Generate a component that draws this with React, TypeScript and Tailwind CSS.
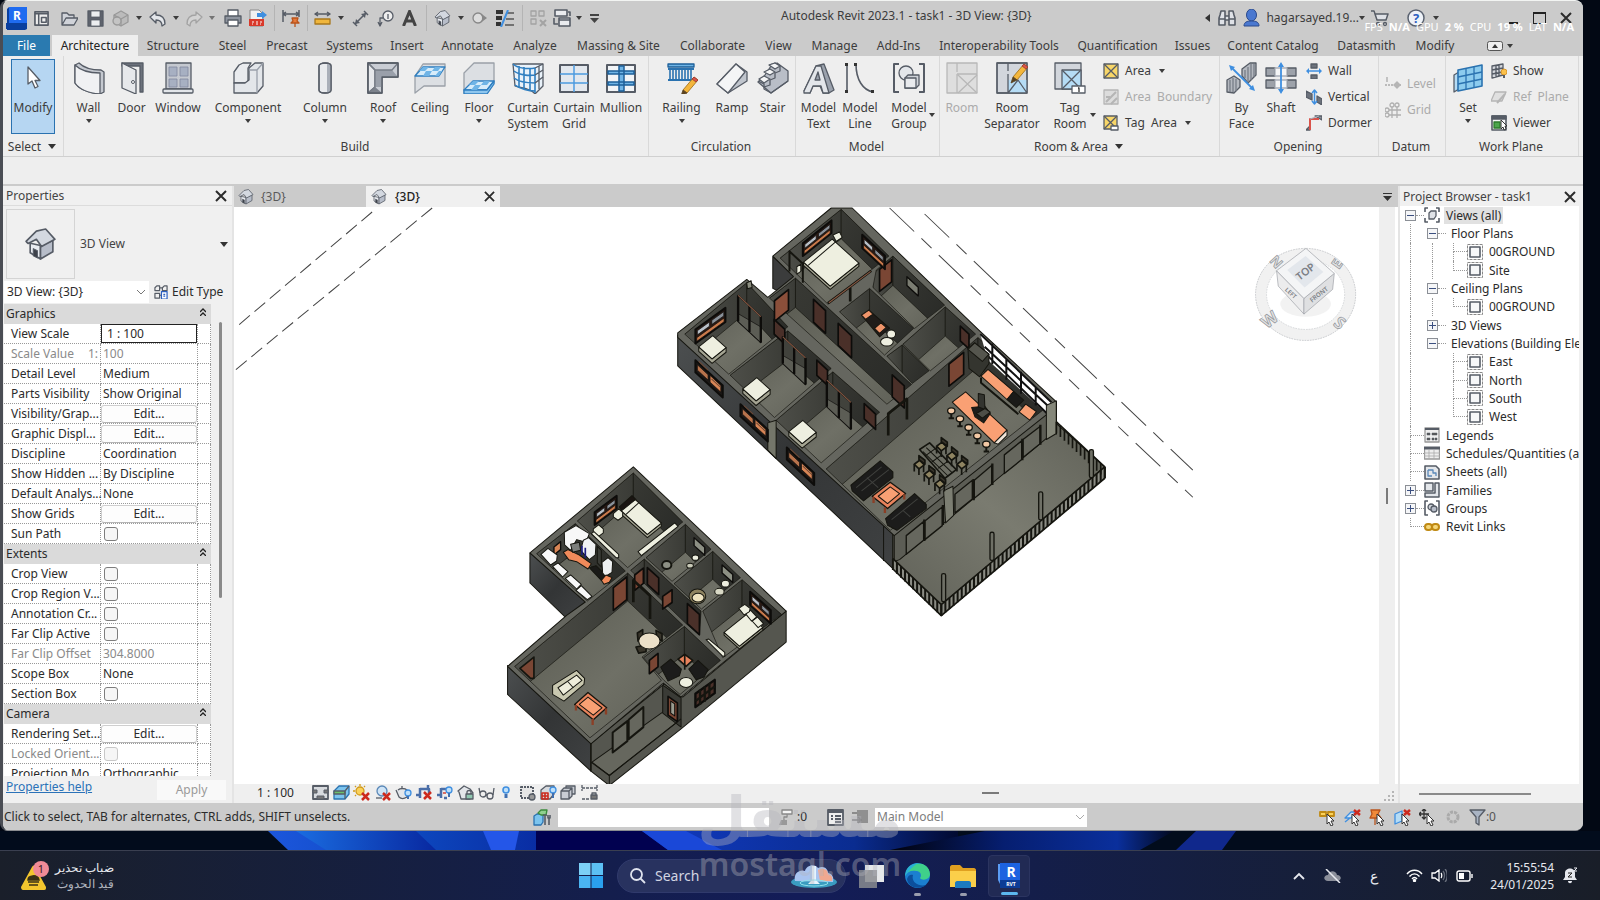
import { useId, useState } from "react"
import type { ReactNode } from "react"
import { clsx } from "clsx"

// ─── Icon helpers ─────────────────────────────────────────────────────────────

const INK = "#565c66"
const STEEL = "#dfe2e7"
const SHADE = "#a9afb9"
const BLUE = "#2f7fc1"
const SKY = "#b5dcf5"

interface IconProps {
  size?: number
  box?: number
  className?: string
  children: ReactNode
}

function Icon({ size = 32, box = 32, className, children }: IconProps) {
  return (
    <svg
      width={size}
      height={size}
      viewBox={`0 0 ${box} ${box}`}
      fill="none"
      stroke={INK}
      strokeWidth={1.3}
      strokeLinejoin="round"
      className={clsx("shrink-0", className)}
      aria-hidden="true"
    >
      {children}
    </svg>
  )
}

function Caret({ className }: { className?: string }) {
  return (
    <svg width="6" height="4" viewBox="0 0 6 4" className={clsx("shrink-0", className)} aria-hidden="true">
      <path d="M0 0h6L3 4z" fill="#3c3c3c" />
    </svg>
  )
}

function BigCaret() {
  return (
    <svg width="8" height="5" viewBox="0 0 8 5" className="shrink-0" aria-hidden="true">
      <path d="M0 0h8L4 5z" fill="#333" />
    </svg>
  )
}

function CloseX({ size = 12 }: { size?: number }) {
  return (
    <svg width={size} height={size} viewBox="0 0 12 12" stroke="#2c2c2c" strokeWidth="2" aria-hidden="true">
      <path d="M1 1l10 10M11 1L1 11" />
    </svg>
  )
}

function HouseIcon({ size = 16 }: { size?: number }) {
  return (
    <Icon size={size} box={32}>
      <path d="M3 14l3-2v12l10 6V17z" fill="#e9ecf1" strokeWidth={1.6} />
      <path d="M16 17l12-5v11l-12 7z" fill="#b7bdc9" strokeWidth={1.6} />
      <path d="M2 13L12 3l9-2 9 10-13 7-5-7-8 4z" fill="#d3d8e0" strokeWidth={1.6} />
      <path d="M9 20l4 2v7l-4-2z" fill="#3d414a" strokeWidth={1} />
    </Icon>
  )
}

// ─── Ribbon icons ─────────────────────────────────────────────────────────────

const pencil = (
  <g strokeWidth="0.8">
    <path d="M28 2l4 3-11 13-4-3z" fill="#f4b63c" stroke="#9a6a14" />
    <path d="M17 15l4 3-6 3z" fill="#5a4320" stroke="#5a4320" />
    <path d="M28 2l4 3-2 2-4-3z" fill="#d9534a" stroke="#9a3a30" />
  </g>
)

const ribbonIcons: Record<string, ReactNode> = {
  modify: (
    <Icon>
      <path d="M11 7v17l4-3 3 7 3-1.500-3-6h5z" fill="#fff" />
    </Icon>
  ),
  wall: (
    <Icon>
      <path d="M2 3l4-2c5 5 14 7 22 7l3 2v20l-4 2C14 31 5 26 2 21z" fill="#c5c9d0" />
      <path d="M2 3c6 6 15 8 25 8v21C15 31 6 27 2 21z" fill="#f0f1f3" />
    </Icon>
  ),
  door: (
    <Icon>
      <path d="M6 1h21v29h-3V4H6z" fill="#6c727c" />
      <path d="M6 1l14 7v24L6 26z" fill="#e6e8eb" />
      <circle cx="17" cy="20" r="1.500" fill="#fff" strokeWidth={1} />
    </Icon>
  ),
  window: (
    <Icon>
      <rect x="4" y="1" width="25" height="26" fill="#c5c9d0" />
      <path d="M7 5h8v9H7zM18 5h8v9h-8zM7 17h8v8H7zM18 17h8v8h-8z" fill="#a7b0c2" stroke="#8189a0" strokeWidth={0.8} />
      <rect x="1" y="27" width="30" height="4" rx="1" fill="#e3e6ea" />
    </Icon>
  ),
  component: (
    <Icon>
      <path d="M2 21V10l5-7 4-2h8l-3 5v15z" fill="#e9ebee" />
      <path d="M2 31V21h11l4-3V6l6-5h8v23l-6 7z" fill="#e3e6ea" />
      <path d="M25 31V8l6-7M17 8h8" stroke="#9aa0aa" />
    </Icon>
  ),
  column: (
    <Icon>
      <path d="M10 4c0-4 12-4 12 0v24c0 4-12 4-12 0z" fill="#e9ebee" />
      <path d="M18 2c3 0 4 1 4 2v24c0 2-2 3-4 3z" fill={SHADE} stroke="none" />
      <path d="M10 4c0-4 12-4 12 0v24c0 4-12 4-12 0z" />
    </Icon>
  ),
  roof: (
    <Icon>
      <path d="M1 1h30v14H15v16H1z" fill="#c9cdd4" />
      <path d="M1 1l7 7v17l-7 6z" fill="#e6e8eb" />
      <path d="M8 8h17l6 7H15v10l-7 0z" fill="#9aa0aa" stroke="none" />
      <path d="M1 31l7-6 7 6z" fill="#7c828c" stroke="none" />
      <path d="M31 1l-6 7H8v17M1 1l7 7M1 31l7-6" stroke="#777d87" />
      <path d="M1 1h30v14H15v16H1z" />
    </Icon>
  ),
  ceiling: (
    <Icon>
      <path d="M1 14L9 2h22v22H10l-9 7z" fill="#dcdfe3" stroke="#9aa0a8" />
      <path d="M1 14L9 5h22l-6 9z" fill="#d7ecfa" stroke={BLUE} />
      <path d="M9 5h6l-4 4H5zM21 5h6l-3 4h-6zM12 9h6l-3 5H9zM25 9h3l-3 5h-4z" fill="#6fb4e6" stroke="none" />
    </Icon>
  ),
  floor: (
    <Icon>
      <path d="M1 29V11L11 1h20v20l-7 10H1z" fill="#dcdfe3" stroke="#9aa0a8" />
      <path d="M1 28l9-9h21l-7 9z" fill="#d7ecfa" stroke={BLUE} />
      <path d="M1 28h23l7-9v3l-7 10H1z" fill="#8ec6ee" stroke={BLUE} />
      <path d="M10 19h6l-4 4H6zM21 19h6l-3 4h-6zM12 23h6l-4 5H8z" fill="#6fb4e6" stroke="none" />
    </Icon>
  ),
  curtainSystem: (
    <Icon>
      <path d="M1 2h30v22l-8 8c-4-6-14-6-20-8z" fill="#e9f2fa" />
      <path d="M1 2c5 5 17 5 22 4M2 9c5 4 15 5 21 4M2 16c5 4 15 5 21 5M3 23c5 4 14 6 20 6M7 4v22M12 5v22M18 6v23M23 6v25" stroke={BLUE} strokeWidth={1.600} />
      <path d="M23 6l8-4M23 13l8-5M23 21l8-6M27 4v23" />
    </Icon>
  ),
  curtainGrid: (
    <Icon>
      <rect x="2" y="3" width="28" height="27" fill="#e3e8ee" strokeWidth={2} />
      <path d="M2 12h28M2 21h28M16 3v27" stroke="#4c9be0" strokeWidth={1.500} />
    </Icon>
  ),
  mullion: (
    <Icon>
      <rect x="2" y="3" width="28" height="27" fill="#f1f4f7" strokeWidth={2} />
      <path d="M3 9h26v3H3zM3 20h26v3H3zM14 4h5v25h-5z" fill="#6fb4e6" stroke="#1d5f99" strokeWidth={1.500} />
    </Icon>
  ),
  railing: (
    <Icon>
      <path d="M2 2h26v3H2z" fill="#6fb4e6" stroke="#1d5f99" />
      <path d="M2 7h26M2 18h26" stroke="#2a72b0" strokeWidth={2} />
      <path d="M4 7v12M7 7v12M10 7v12M13 7v12M16 7v12M19 7v12M22 7v12M25 7v12" stroke="#2a72b0" strokeWidth={1.600} />
      <g transform="translate(0 13)">{pencil}</g>
    </Icon>
  ),
  ramp: (
    <Icon>
      <path d="M1 22L20 2l11 8v9L12 31z" fill="#c0c5cd" />
      <path d="M1 22L20 2l9 8-17 21z" fill="#f4f5f6" />
    </Icon>
  ),
  stair: (
    <Icon>
      <path d="M14 31l17-12V9L20 1l-6 3-4 6-4 6-5 4z" fill="#b9bec7" />
      <path d="M12 3l6-2 5 3v5l-5 2v5l-5 2v5l-6 2" fill="none" />
      <path d="M12 3l6-2 5 3-5 3zM7 10l6-3 5 3-5 3zM2 17l5-3 6 3-6 4z" fill="#f4f5f6" />
      <path d="M1 19l6 3v5l7 4 17-12" />
    </Icon>
  ),
  modelText: (
    <Icon>
      <path d="M1 29L13 4l8-2 10 26-5 3h-6l-3-7h-7l-3 7z" fill="#9ba2ad" />
      <path d="M1 29L13 4h5l8 27h-6l-2-7h-8l-3 7H1zM12 18h5l-2-8z" fill="#e3e6ea" />
    </Icon>
  ),
  modelLine: (
    <Icon>
      <path d="M3 2v28M12 2c0 16 7 26 17 28" strokeWidth={1.600} />
      <path d="M1 1h3v3H1zM1 28h3v3H1zM10 1h3v3h-3zM27 28h3v3h-3z" fill="#333" stroke="none" />
    </Icon>
  ),
  modelGroup: (
    <Icon>
      <path d="M6 2H1v28h5M26 2h5v28h-5" strokeWidth={2} />
      <circle cx="13" cy="11" r="7" fill="#e3e6ea" />
      <path d="M12 16l3-3h11v10l-3 3H12z" fill="#cfd3d9" />
      <path d="M12 16h11v10H12z" fill="#e9ebee" />
    </Icon>
  ),
  room: (
    <Icon>
      <g stroke="#b8b8b8">
        <path d="M1 1h30v30H1z" fill="#dedede" />
        <path d="M11 1v9M11 12h20M11 12v19M12 13l19 18M31 13L12 31" />
      </g>
    </Icon>
  ),
  roomSeparator: (
    <Icon>
      <path d="M1 1h30v30H1z" fill="#d2d6dc" />
      <path d="M12 18h19v13H12z" fill={SKY} stroke="none" />
      <path d="M12 1v8M12 12v19M12 31l10-13 9 13M1 1h30v30H1z" />
      {pencil}
    </Icon>
  ),
  tagRoom: (
    <Icon>
      <path d="M1 1h26v26H1z" fill="#d2d6dc" />
      <path d="M8 8h19v19H8z" fill={SKY} />
      <path d="M8 8l19 19M27 8L8 27" />
      <path d="M18 24h13v7H18z" fill="#fff" />
      <path d="M24 26h1v4" stroke="#333" />
    </Icon>
  ),
  byFace: (
    <Icon>
      <path d="M16 14V7l8-6h6v12l-8 8zM1 30V18l7-4 6 4v7l-6 6z" fill="#b4b8bf" />
      <path d="M19 8v8M22 5v15M25 2v16M28 2v13M4 18v12M7 16v14M10 17v12" stroke="#777d87" />
      <path d="M6 6l20 20" stroke="#3f8fe0" strokeWidth={1.800} />
      <path d="M3 3l6 2-4 4zM29 29l-6-2 4-4z" fill="#3f8fe0" stroke="none" />
    </Icon>
  ),
  shaft: (
    <Icon>
      <path d="M1 6h9v8H1zM22 6h9v8h-9zM1 18h9v8H1zM22 18h9v8h-9z" fill="#9da2aa" />
      <path d="M10 6h12v8H10zM10 18h12v8H10z" fill="#f4f5f6" stroke={SHADE} />
      <path d="M16 3v26" stroke="#3f8fe0" strokeWidth={1.800} />
      <path d="M16 0l3 5h-6zM16 32l3-5h-6z" fill="#3f8fe0" stroke="none" />
    </Icon>
  ),
  set: (
    <Icon>
      <path d="M2 13l5-3v17l-5 3z" fill={SKY} />
      <path d="M6 8l24-5v21L6 29z" fill="#8ccbee" stroke="#2a72b0" strokeWidth={1.600} />
      <path d="M14 6v21M22 5v21M6 15l24-5M6 22l24-5" stroke="#2a72b0" />
    </Icon>
  ),
}

const smallIcons: Record<string, ReactNode> = {
  area: (
    <Icon size={16} box={16}>
      <path d="M1 1h14v14H1z" fill="#f8d668" />
      <path d="M1 1l14 14M15 1L1 15" />
    </Icon>
  ),
  areaBoundary: (
    <Icon size={16} box={16}>
      <g stroke="#b5b5b5">
        <path d="M1 1h14v14H1z" fill="#dcdcdc" />
        <path d="M3 13L13 3M3 8h4M8 15l6-6" strokeWidth={2} />
      </g>
    </Icon>
  ),
  tagArea: (
    <Icon size={16} box={16}>
      <path d="M1 1h13v13H1z" fill="#f8d668" />
      <path d="M1 1l13 13M14 1L1 14" />
      <path d="M8 11h7v4H8z" fill="#fff" />
    </Icon>
  ),
  openWall: (
    <Icon size={16} box={16}>
      <path d="M5 1h6v4H5zM5 12h6v4H5z" fill="#6c727c" />
      <path d="M2 8h12" stroke="#3f8fe0" strokeWidth={1.500} />
      <path d="M0 8l3-3v6zM16 8l-3-3v6z" fill="#3f8fe0" stroke="none" />
    </Icon>
  ),
  vertical: (
    <Icon size={16} box={16}>
      <path d="M0 2l6 3v6L0 8zM11 7l5 3v6l-5-3z" fill="#6c727c" />
      <path d="M8.500 1v14M6 4l2.500-3L11 4M6 12l2.500 3 2.500-3" stroke="#3f8fe0" strokeWidth={1.500} />
    </Icon>
  ),
  dormer: (
    <Icon size={16} box={16}>
      <path d="M9 1h7v4zM0 15l4-4v4z" fill="#8b9099" />
      <path d="M4 15V4h9" stroke="#d9534a" strokeWidth={2} />
      <path d="M4 4l9-3" stroke={SHADE} />
    </Icon>
  ),
  level: (
    <Icon size={16} box={16}>
      <path d="M0 9h16" stroke="#aaa" strokeDasharray="2 1" />
      <path d="M2 1v5" stroke="#aaa" />
      <path d="M8 9l4-4 4 4-4 4z" fill="#b5b5b5" stroke="none" />
    </Icon>
  ),
  grid: (
    <Icon size={16} box={16}>
      <g stroke="#b0b0b0">
        <path d="M7 5v11M12 5v11M4 8h12M4 13h12" />
        <circle cx="7" cy="3" r="2" />
        <circle cx="12" cy="3" r="2" />
        <circle cx="2" cy="8" r="2" />
        <circle cx="2" cy="13" r="2" />
      </g>
    </Icon>
  ),
  show: (
    <Icon size={16} box={16}>
      <path d="M1 3l11-2v11L1 15zM5 2v12M8 2v12M1 7l11-2M1 11l11-2" fill="#d4d7dc" />
      <circle cx="13" cy="9" r="3" fill="#fbc14b" stroke="#d08a1c" strokeWidth={0.800} />
      <path d="M13 12v3" strokeWidth={2} />
    </Icon>
  ),
  refPlane: (
    <Icon size={16} box={16}>
      <g stroke="#b5b5b5">
        <path d="M4 3h11l-4 9H0z" fill="#e0e0e0" />
        <path d="M6 14l8-9" strokeWidth={2} />
      </g>
    </Icon>
  ),
  viewer: (
    <Icon size={16} box={16}>
      <path d="M1 1h14v14H1z" fill="#f4f5f6" strokeWidth={1.600} />
      <path d="M1 1h14v3H1z" fill="#565c66" />
      <path d="M3 7h6v6H3z" fill="#4ca64c" stroke="#2c7a2c" />
      <path d="M10 5v9l2-2 1 3 2-1-1-3h2z" fill="#fff" stroke="#333" strokeWidth={1} />
    </Icon>
  ),
}

// ─── Title bar ────────────────────────────────────────────────────────────────

const TITLE_DIVIDER = <span className="h-[26px] w-px bg-[#b4b4b4]" />

const quickAccess: { label: string; width: string; icon: ReactNode }[] = [
  {
    label: "Home", width: "w-[24px]", icon: (
      <Icon size={15} box={16}>
        <path d="M1 1h14v14H1z" fill="#eee" strokeWidth={1.800} />
        <path d="M1 3h14M5 3v12M8 7h5v5H8z" strokeWidth={1.600} />
      </Icon>
    ),
  },
  {
    label: "Open", width: "w-[26px] ml-[3px]", icon: (
      <Icon size={17} box={17}>
        <path d="M1 15V3h5l2 2h5v3M1 15l4-7h12l-4 7z" fill="#d0d3d9" />
      </Icon>
    ),
  },
  {
    label: "Save", width: "w-[26px]", icon: (
      <Icon size={17} box={17}>
        <path d="M1 1h15v15H1z" fill="#5e636d" />
        <path d="M4 1h9v6H4zM4 10h9v6H4z" fill="#eceef0" strokeWidth={0.800} />
      </Icon>
    ),
  },
  {
    label: "Synchronize", width: "w-[24px]", icon: (
      <Icon size={17} box={17}>
        <g stroke="#999">
          <path d="M2 5l7-4 7 4v7l-7 4-7-4z" fill="#bbb" />
          <path d="M2 5l7 4 7-4M9 9v7" />
          <circle cx="5" cy="11" r="4" fill="#c4c4c4" />
        </g>
      </Icon>
    ),
  },
  { label: "Synchronize options", width: "w-[14px]", icon: <Caret /> },
  {
    label: "Undo", width: "w-[22px]", icon: (
      <Icon size={17} box={17}>
        <path d="M1 7l6-5v3c6 0 9 3 9 9l-3 2c0-4-2-6-6-6v3z" fill="#e3e6ea" />
      </Icon>
    ),
  },
  { label: "Undo list", width: "w-[16px]", icon: <Caret /> },
  {
    label: "Redo", width: "w-[20px]", icon: (
      <Icon size={17} box={17}>
        <path d="M16 7l-6-5v3c-6 0-9 3-9 9l3 2c0-4 2-6 6-6v3z" fill="#d3d3d3" stroke="#a3a3a3" />
      </Icon>
    ),
  },
  { label: "Redo list", width: "w-[16px]", icon: <Caret className="opacity-60" /> },
  {
    label: "Print", width: "w-[25px]", icon: (
      <Icon size={18} box={18}>
        <path d="M4 7V1h10v6" fill="#fff" />
        <path d="M1 7h16v7H1z" fill="#8f959f" />
        <path d="M4 11h10v6H4z" fill="#fff" />
      </Icon>
    ),
  },
  {
    label: "Export PDF", width: "w-[25px]", icon: (
      <svg width="18" height="18" viewBox="0 0 18 18" aria-hidden="true">
        <path d="M1 1h9l4 4v12H1z" fill="#f1f1f1" stroke="#8a8a8a" />
        <path d="M0 10h15v7H0z" fill="#d93a2b" />
        <path d="M8 4h5V2l5 4-5 4V8H8z" fill="#3f8fe0" />
        <path d="M3 13h2M7 13h2M11 13h2M3 15h1M7 15h2M11 15h1" stroke="#fff" fill="none" />
      </svg>
    ),
  },
  { label: "", width: "w-[8px]", icon: TITLE_DIVIDER },
  {
    label: "Linked dimension", width: "w-[25px]", icon: (
      <Icon size={18} box={18}>
        <path d="M1 1v12M17 1v7M1 5h16M4 3L1 5l3 2M14 3l3 2-3 2" strokeWidth={1.500} />
        <path d="M10 9h6l-1 3 2 2h-8l2-2zM13 14v4" fill="#e87a3a" stroke="#b9541c" />
      </Icon>
    ),
  },
  { label: "", width: "w-[8px]", icon: TITLE_DIVIDER },
  {
    label: "Measure", width: "w-[22px]", icon: (
      <Icon size={17} box={17}>
        <path d="M1 4h15M4 2L1 4l3 2M13 2l3 2-3 2" strokeWidth={1.500} />
        <path d="M1 9h15v5H1z" fill="#f0b63c" stroke="#a8781c" />
      </Icon>
    ),
  },
  { label: "Measure options", width: "w-[16px]", icon: <Caret /> },
  {
    label: "Aligned dimension", width: "w-[23px]", icon: (
      <Icon size={17} box={17}>
        <path d="M3 14L14 3M1 12l4 4M12 1l4 4" strokeWidth={1.500} />
        <path d="M3 14l1-5 4 4zM14 3l-1 5-4-4z" fill={INK} stroke="none" />
      </Icon>
    ),
  },
  {
    label: "Tag by category", width: "w-[26px]", icon: (
      <Icon size={17} box={17}>
        <circle cx="11" cy="6" r="5" fill="#eee" />
        <path d="M11 4v5M6 8H3v7M1 12l2 4 2-4" />
      </Icon>
    ),
  },
  {
    label: "Text", width: "w-[23px]", icon: (
      <svg width="15" height="16" viewBox="0 0 15 16" fill="none" stroke="#444" strokeWidth="3" aria-hidden="true">
        <path d="M1.500 16L7.500 1.500 13.500 16M4 11h7" />
      </svg>
    ),
  },
  { label: "", width: "w-[10px]", icon: TITLE_DIVIDER },
  { label: "Default 3D view", width: "w-[22px]", icon: <HouseIcon size={17} /> },
  { label: "3D view options", width: "w-[16px]", icon: <Caret /> },
  {
    label: "Section", width: "w-[21px]", icon: (
      <Icon size={15} box={15}>
        <circle cx="6" cy="7" r="5" stroke="#888" fill="#ddd" />
        <path d="M7 1l8 6-8 6c4-3 4-9 0-12z" fill="#888" stroke="none" />
      </Icon>
    ),
  },
  {
    label: "Thin lines", width: "w-[29px]", icon: (
      <svg width="18" height="17" viewBox="0 0 18 17" aria-hidden="true">
        <path d="M0 2h7M0 8h6M0 14h5" stroke="#333" strokeWidth="4" />
        <path d="M11 3h7M10 9h8M9 15h9" stroke="#555" strokeWidth="1.500" />
        <path d="M12 0L5 17" stroke="#3f8fe0" strokeWidth="2" />
      </svg>
    ),
  },
  { label: "", width: "w-[6px]", icon: TITLE_DIVIDER },
  {
    label: "Close inactive views", width: "w-[26px]", icon: (
      <Icon size={17} box={17}>
        <g stroke="#a3a3a3">
          <path d="M1 1h5v5H1zM9 1h5v5H9zM1 9h5v5H1z" />
          <path d="M10 10l6 6M16 10l-6 6" strokeWidth={2} />
        </g>
      </Icon>
    ),
  },
  {
    label: "Switch windows", width: "w-[22px]", icon: (
      <Icon size={18} box={18}>
        <path d="M2 1h12v6H2zM6 9h11v8H6z" fill="#e9ebee" strokeWidth={1.600} />
        <path d="M6 11h11M15 3h2v4M1 9v6h4" strokeWidth={1.600} />
      </Icon>
    ),
  },
  { label: "Switch windows list", width: "w-[12px]", icon: <Caret /> },
  {
    label: "Customize toolbar", width: "w-[18px]", icon: (
      <svg width="9" height="9" viewBox="0 0 9 9" aria-hidden="true">
        <path d="M0 1h9" stroke="#444" strokeWidth="2" />
        <path d="M0 4h9L4.500 9z" fill="#444" />
      </svg>
    ),
  },
]

function TitleBar() {
  return (
    <header className="relative flex h-[34px] shrink-0 items-center bg-[#cbcbcb]">
      <div className="flex w-[26px] justify-center">
        <svg width="21" height="23" viewBox="0 0 21 23" aria-hidden="true">
          <path d="M1 2l2-2h18v22l-2 1H1z" fill="#0a3f9e" />
          <path d="M3 0h18v16H3z" fill="#1f6bf0" />
          <path d="M0 16h21v6H0z" fill="#0a3f9e" />
          <text x="11" y="13" fontSize="12" fontWeight="700" textAnchor="middle" fill="#fff">R</text>
        </svg>
      </div>
      {quickAccess.map((item, i) =>
        item.label ? (
          <button key={i} aria-label={item.label} className={clsx("flex justify-center", item.width)}>
            {item.icon}
          </button>
        ) : (
          <span key={i} className={clsx("flex justify-center", item.width)}>{item.icon}</span>
        ),
      )}
      <h1 className="flex-1 pb-[4px] pl-[178px] text-[12px] whitespace-nowrap text-[#3c3c3c]">
        Autodesk Revit 2023.1 - task1 - 3D View: {"{3D}"}
      </h1>
      <div className="flex items-center text-[12px] text-[#3c3c3c]">
        <svg width="5" height="8" viewBox="0 0 5 8" className="mr-[8px]" aria-hidden="true"><path d="M5 0v8L0 4z" fill="#333" /></svg>
        <button aria-label="Search help" className="mr-[7px]">
          <Icon size={18} box={18}>
            <path d="M2 6l1-4h4v14H1V9zM16 6l-1-4h-4v14h6V9zM7 7h4v4H7zM1 10h6M11 10h6" fill="#dfe2e7" strokeWidth={1.600} />
          </Icon>
        </button>
        <button className="flex items-center">
          <svg width="17" height="18" viewBox="0 0 17 18" className="mr-[6px]" aria-hidden="true">
            <ellipse cx="8.500" cy="6" rx="5" ry="6" fill="#4a78d0" stroke="#2b4a8c" />
            <path d="M1 17c0-4 3-5 7.500-5s7.500 1 7.500 5z" fill="#4a78d0" stroke="#2b4a8c" />
          </svg>
          hagarsayed.19...
          <Caret />
        </button>
        <button aria-label="App store" className="ml-[6px]">
          <Icon size={18} box={18}>
            <path d="M0 2h3l3 9h9l2-6H4" fill="#dfe2e7" strokeWidth={1.500} />
            <circle cx="7" cy="15" r="1.500" />
            <circle cx="14" cy="15" r="1.500" />
          </Icon>
        </button>
        <span className="mx-[9px]">{TITLE_DIVIDER}</span>
        <button aria-label="Help">
          <svg width="18" height="18" viewBox="0 0 18 18" aria-hidden="true">
            <circle cx="9" cy="9" r="8" fill="#eef2f8" stroke="#5a6270" strokeWidth="1.500" />
            <text x="9" y="14" fontSize="13" fontWeight="700" textAnchor="middle" fill="#2b5fc0">?</text>
          </svg>
        </button>
        <Caret className="mr-[70px] ml-[8px]" />
        <button aria-label="Minimize" className="mt-[9px] mr-[15px] h-[2px] w-[9px] bg-[#222]" />
        <button aria-label="Maximize" className="mr-[14px] h-[12px] w-[13px] border border-t-2 border-[#222]" />
        <button aria-label="Close" className="mr-[11px]"><CloseX /></button>
      </div>
      <div className="absolute top-[18px] right-[9px] flex gap-[6px] text-[11px] leading-[16px] whitespace-nowrap text-white">
        <span>FPS</span><b>N/A</b><span>GPU</span><b>2 %</b><span>CPU</span><b>19 %</b><span>LAT</span><b>N/A</b>
      </div>
    </header>
  )
}

// ─── Ribbon tabs ──────────────────────────────────────────────────────────────

const tabs: [string, string][] = [
  ["Architecture", "w-[86px]"],
  ["Structure", "w-[70px]"],
  ["Steel", "w-[49px]"],
  ["Precast", "w-[60px]"],
  ["Systems", "w-[65px]"],
  ["Insert", "w-[50px]"],
  ["Annotate", "w-[71px]"],
  ["Analyze", "w-[64px]"],
  ["Massing & Site", "w-[103px]"],
  ["Collaborate", "w-[85px]"],
  ["View", "w-[47px]"],
  ["Manage", "w-[65px]"],
  ["Add-Ins", "w-[63px]"],
  ["Interoperability Tools", "w-[138px]"],
  ["Quantification", "w-[99px]"],
  ["Issues", "w-[51px]"],
  ["Content Catalog", "w-[110px]"],
  ["Datasmith", "w-[77px]"],
  ["Modify", "w-[60px]"],
]

function RibbonTabs() {
  const [active, setActive] = useState("Architecture")
  return (
    <nav className="flex h-[21px] shrink-0 bg-[#cbcbcb] text-[12px] whitespace-nowrap text-[#3c3c3c]">
      <button className="mr-[2px] w-[47px] shrink-0 bg-[#2a7ab0] text-white">File</button>
      {tabs.map(([label, width]) => (
        <button
          key={label}
          onClick={() => setActive(label)}
          className={clsx("flex shrink-0 items-center justify-center", width, active === label && "bg-[#eeeeee] text-[#222]")}
        >
          {label}
        </button>
      ))}
      <button aria-label="Minimize ribbon" className="ml-[22px] flex items-center gap-[4px]">
        <svg width="16" height="10" viewBox="0 0 16 10" aria-hidden="true">
          <rect x="0.500" y="0.500" width="15" height="9" rx="2" fill="#eee" stroke="#555" />
          <path d="M5 7l3-4 3 4z" fill="#333" />
        </svg>
        <Caret />
      </button>
    </nav>
  )
}

// ─── Ribbon ───────────────────────────────────────────────────────────────────

interface ToolProps {
  icon: string
  lines: string[]
  width: string
  caret?: "below" | "side"
  disabled?: boolean
}

function Tool({ icon, lines, width, caret, disabled }: ToolProps) {
  return (
    <button
      disabled={disabled}
      className={clsx("relative flex shrink-0 flex-col items-center pt-[6px]", width, disabled ? "text-[#ababab]" : "text-[#3c3c3c]")}
    >
      {ribbonIcons[icon]}
      <span className="mt-[6px] text-[12px] leading-[16px] whitespace-nowrap">
        {lines.map((line) => <span key={line} className="block">{line}</span>)}
      </span>
      {caret === "below" && <Caret className="mt-[3px]" />}
      {caret === "side" && <Caret className="absolute right-[2px] bottom-[20px]" />}
    </button>
  )
}

interface RowToolProps {
  icon: string
  label: string
  caret?: boolean
  disabled?: boolean
}

function RowTool({ icon, label, caret, disabled }: RowToolProps) {
  return (
    <button
      disabled={disabled}
      className={clsx(
        "flex h-[26px] items-center gap-[6px] text-[12px] whitespace-nowrap",
        disabled ? "text-[#ababab]" : "text-[#3c3c3c]",
      )}
    >
      {smallIcons[icon]}
      <span className="whitespace-pre">{label}</span>
      {caret && <Caret className="ml-[2px]" />}
    </button>
  )
}

interface PanelProps {
  title: ReactNode
  width: string
  inset?: string
  children: ReactNode
}

function Panel({ title, width, inset, children }: PanelProps) {
  return (
    <section className={clsx("flex shrink-0 flex-col border-r border-[#d9d9d9]", width)}>
      <div className={clsx("flex flex-1", inset)}>{children}</div>
      <h2 className="flex h-[19px] items-center justify-center gap-[7px] pr-[2px] text-[12px] text-[#3c3c3c]">{title}</h2>
    </section>
  )
}

function Ribbon() {
  return (
    <div className="flex h-[101px] shrink-0 border-b border-[#d0d0d0] bg-[#eeeeee]">
      <Panel title={<>Select <BigCaret /></>} width="w-[61px]">
        <button className="mt-[3px] ml-[8px] flex h-[75px] w-[44px] flex-col items-center border border-[#2a72b0] bg-[#b6d6f2] text-[12px] text-[#3c3c3c]">
          <span className="mb-[7px]">{ribbonIcons.modify}</span>
          Modify
        </button>
      </Panel>
      <Panel title="Build" width="w-[585px]" inset="pl-[2px]">
        <Tool icon="wall" lines={["Wall"]} width="w-[45px]" caret="below" />
        <Tool icon="door" lines={["Door"]} width="w-[41px]" />
        <Tool icon="window" lines={["Window"]} width="w-[52px]" />
        <Tool icon="component" lines={["Component"]} width="w-[88px]" caret="below" />
        <Tool icon="column" lines={["Column"]} width="w-[66px]" caret="below" />
        <Tool icon="roof" lines={["Roof"]} width="w-[50px]" caret="below" />
        <Tool icon="ceiling" lines={["Ceiling"]} width="w-[44px]" />
        <Tool icon="floor" lines={["Floor"]} width="w-[54px]" caret="below" />
        <Tool icon="curtainSystem" lines={["Curtain", "System"]} width="w-[44px]" />
        <Tool icon="curtainGrid" lines={["Curtain", "Grid"]} width="w-[48px]" />
        <Tool icon="mullion" lines={["Mullion"]} width="w-[46px]" />
      </Panel>
      <Panel title="Circulation" width="w-[147px]" inset="pl-[6px]">
        <Tool icon="railing" lines={["Railing"]} width="w-[53px]" caret="below" />
        <Tool icon="ramp" lines={["Ramp"]} width="w-[48px]" />
        <Tool icon="stair" lines={["Stair"]} width="w-[33px]" />
      </Panel>
      <Panel title="Model" width="w-[144px]" inset="pl-[2px]">
        <Tool icon="modelText" lines={["Model", "Text"]} width="w-[41px]" />
        <Tool icon="modelLine" lines={["Model", "Line"]} width="w-[42px]" />
        <Tool icon="modelGroup" lines={["Model", "Group"]} width="w-[56px]" caret="side" />
      </Panel>
      <Panel title={<>Room &amp; Area <BigCaret /></>} width="w-[280px]" inset="pl-[2px]">
        <Tool icon="room" lines={["Room"]} width="w-[40px]" disabled />
        <Tool icon="roomSeparator" lines={["Room", "Separator"]} width="w-[60px]" />
        <Tool icon="tagRoom" lines={["Tag", "Room"]} width="w-[56px]" caret="side" />
        <div className="ml-[5px] pt-[2px]">
          <RowTool icon="area" label="Area" caret />
          <RowTool icon="areaBoundary" label="Area  Boundary" disabled />
          <RowTool icon="tagArea" label="Tag  Area" caret />
        </div>
      </Panel>
      <Panel title="Opening" width="w-[159px]" inset="pl-[2px]">
        <Tool icon="byFace" lines={["By", "Face"]} width="w-[39px]" />
        <Tool icon="shaft" lines={["Shaft"]} width="w-[40px]" />
        <div className="ml-[5px] pt-[2px]">
          <RowTool icon="openWall" label="Wall" />
          <RowTool icon="vertical" label="Vertical" />
          <RowTool icon="dormer" label="Dormer" />
        </div>
      </Panel>
      <Panel title="Datum" width="w-[67px]" inset="pl-[6px]">
        <div className="pt-[15px]">
          <RowTool icon="level" label="Level" disabled />
          <RowTool icon="grid" label="Grid" disabled />
        </div>
      </Panel>
      <Panel title="Work Plane" width="w-[133px]" inset="pl-[2px]">
        <Tool icon="set" lines={["Set"]} width="w-[40px]" caret="below" />
        <div className="ml-[3px] pt-[2px]">
          <RowTool icon="show" label="Show" />
          <RowTool icon="refPlane" label="Ref  Plane" disabled />
          <RowTool icon="viewer" label="Viewer" />
        </div>
      </Panel>
    </div>
  )
}

// ─── Properties palette ───────────────────────────────────────────────────────

type PropertyKind = "input" | "text" | "button" | "check"

interface PropertyRow {
  label: string
  kind: PropertyKind
  value?: string
  suffix?: string
  disabled?: boolean
}

const propertyGroups: { title: string; rows: PropertyRow[] }[] = [
  {
    title: "Graphics",
    rows: [
      { label: "View Scale", kind: "input", value: "1 : 100" },
      { label: "Scale Value", suffix: "1:", kind: "text", value: "100", disabled: true },
      { label: "Detail Level", kind: "text", value: "Medium" },
      { label: "Parts Visibility", kind: "text", value: "Show Original" },
      { label: "Visibility/Grap...", kind: "button", value: "Edit..." },
      { label: "Graphic Displ...", kind: "button", value: "Edit..." },
      { label: "Discipline", kind: "text", value: "Coordination" },
      { label: "Show Hidden ...", kind: "text", value: "By Discipline" },
      { label: "Default Analys...", kind: "text", value: "None" },
      { label: "Show Grids", kind: "button", value: "Edit..." },
      { label: "Sun Path", kind: "check" },
    ],
  },
  {
    title: "Extents",
    rows: [
      { label: "Crop View", kind: "check" },
      { label: "Crop Region V...", kind: "check" },
      { label: "Annotation Cr...", kind: "check" },
      { label: "Far Clip Active", kind: "check" },
      { label: "Far Clip Offset", kind: "text", value: "304.8000", disabled: true },
      { label: "Scope Box", kind: "text", value: "None" },
      { label: "Section Box", kind: "check" },
    ],
  },
  {
    title: "Camera",
    rows: [
      { label: "Rendering Set...", kind: "button", value: "Edit..." },
      { label: "Locked Orient...", kind: "check", disabled: true },
      { label: "Projection Mo...", kind: "text", value: "Orthographic" },
    ],
  },
]

function PropertyValue({ row, id }: { row: PropertyRow; id: string }) {
  switch (row.kind) {
    case "input":
      return <input id={id} defaultValue={row.value} className="block h-[19px] w-full border border-[#222] bg-white px-[5px]" />
    case "button":
      return (
        <button id={id} className="block h-[18px] w-full rounded-[3px] border border-[#cfcfcf] border-b-[#b5b5b5] bg-[#fdfdfd] text-center leading-[16px]">
          {row.value}
        </button>
      )
    case "check":
      return (
        <input
          id={id}
          type="checkbox"
          disabled={row.disabled}
          className={clsx(
            "ml-[3px] block size-[14px] appearance-none rounded-[3px] border bg-[#f6f6f6] checked:bg-[#2a7ab0]",
            row.disabled ? "border-[#c8c8c8]" : "border-[#7d7d7d]",
          )}
        />
      )
    default:
      return <span id={id} className="block pl-[2px]">{row.value}</span>
  }
}

function PropertiesPalette() {
  return (
    <aside className="flex w-[229px] shrink-0 flex-col bg-[#f0f0f0] text-[12px] text-[#2b2b2b]">
      <div className="flex h-[20px] shrink-0 items-center justify-between border-b border-[#dcdcdc] pt-px pr-[5px] pl-[3px]">
        <h2 className="text-[#444]">Properties</h2>
        <button aria-label="Close properties"><CloseX /></button>
      </div>
      <div className="mt-[2px] flex h-[72px] shrink-0 items-center pr-[4px] pl-[3px]">
        <div className="flex h-[70px] w-[69px] items-center justify-center border border-[#d4d4d4]">
          <HouseIcon size={33} />
        </div>
        <span className="ml-[5px] flex-1 text-[#444]">3D View</span>
        <BigCaret />
      </div>
      <div className="flex h-[24px] shrink-0 items-center pl-px">
        <div className="relative">
          <select aria-label="View type" className="h-[22px] w-[145px] appearance-none bg-white pl-[3px]">
            <option>3D View: {"{3D}"}</option>
          </select>
          <svg width="8" height="5" viewBox="0 0 8 5" className="pointer-events-none absolute top-[9px] right-[4px]" fill="none" stroke="#777" aria-hidden="true">
            <path d="M0 0l4 4 4-4" />
          </svg>
        </div>
        <button className="ml-[5px] flex items-center gap-[4px]">
          <Icon size={14} box={15}>
            <path d="M1 3l2-2h3v5H1zM9 3l2-2h3v5H9zM1 9h5v5H1zM6 3h3M6 11h3" />
            <path d="M8 7h6v8H8z" fill="#fff" stroke="#2b5fc0" />
            <path d="M10 10h2M10 12h2" stroke="#2b5fc0" />
          </Icon>
          Edit Type
        </button>
      </div>
      <div className="flex min-h-0 flex-1 pl-px">
        <div className="w-[207px] overflow-hidden">
          <table className="w-full table-fixed border-separate border-spacing-0 bg-white">
            <colgroup>
              <col className="w-[97px]" />
              <col className="w-[97px]" />
              <col />
            </colgroup>
            {propertyGroups.map((group) => (
              <tbody key={group.title}>
                <tr className="h-[20px] bg-[#dadada]">
                  <th colSpan={3} className="p-0 text-left font-normal">
                    <span className="flex h-[20px] items-center justify-between pr-[5px] pl-[2px]">
                      {group.title}
                      <svg width="6" height="8" viewBox="0 0 6 8" fill="none" stroke="#222" strokeWidth="1.300" className="mb-[4px]" aria-hidden="true">
                        <path d="M0 4l3-3 3 3M0 8l3-3 3 3" />
                      </svg>
                    </span>
                  </th>
                </tr>
                {group.rows.map((row) => {
                  const id = row.label.toLowerCase().replace(/[^a-z]+/g, "-")
                  return (
                    <tr key={row.label} className={clsx("h-[20px]", row.disabled && "text-[#8a8a8a]")}>
                      <th className="border-r border-b border-dotted border-[#999] p-0 text-left font-normal">
                        <label htmlFor={id} className="flex h-[19px] items-center justify-between pl-[7px] whitespace-nowrap">
                          <span>{row.label}</span>
                          {row.suffix && <span className="pr-[2px]">{row.suffix}</span>}
                        </label>
                      </th>
                      <td className="border-r border-b border-dotted border-[#999] p-0"><PropertyValue row={row} id={id} /></td>
                      <td className="border-r border-b border-dotted border-[#999] p-0" />
                    </tr>
                  )
                })}
              </tbody>
            ))}
          </table>
        </div>
        <div className="flex flex-1 justify-center pt-[18px] pr-[2px]">
          <span className="h-[276px] w-[3px] rounded bg-[#8a8a8a]" />
        </div>
      </div>
      <div className="flex h-[27px] shrink-0 items-start justify-between pt-[2px] pr-[6px] pl-[3px]">
        <a href="#help" className="text-[#2b72b8] underline">Properties help</a>
        <button disabled className="mt-[2px] h-[20px] w-[69px] bg-[#f9f9f9] text-[#9a9a9a]">Apply</button>
      </div>
    </aside>
  )
}

// ─── Model drawing ────────────────────────────────────────────────────────────

type Point = [number, number]

const toPoints = (pts: Point[]) => pts.map((p) => p.join(",")).join(" ")

// A room seen from above: the wall tops bound it, and the two back walls drop
// from that edge down to the floor.
function Room({ outline, back, drop }: { outline: Point[]; back: Point[]; drop: number }) {
  const id = useId()
  return (
    <g clipPath={`url(#${id})`}>
      <clipPath id={id}>
        <polygon points={toPoints(outline)} />
      </clipPath>
      <polygon points={toPoints(outline)} fill="url(#floor)" stroke="none" />
      {back.slice(1).map((end, i) => {
        const start = back[i]
        const rising = end[1] < start[1]
        return (
          <polygon
            key={i}
            points={toPoints([start, end, [end[0], end[1] + drop], [start[0], start[1] + drop]])}
            fill={rising ? "url(#wallLeft)" : "url(#wallRight)"}
            stroke="#15150f"
            strokeWidth={2}
          />
        )
      })}
    </g>
  )
}

interface WallPanelProps {
  x: number
  y: number
  w: number
  h: number
  slope: number
  fill?: string
  frame?: number
}

// Four-cornered panel lying in a wall plane; slope > 0 runs down to the right.
function WallPanel({ x, y, w, h, slope, fill = "#4a3029", frame = 5 }: WallPanelProps) {
  return (
    <polygon
      points={toPoints([[x, y], [x + w, y + w * slope], [x + w, y + w * slope + h], [x, y + h]])}
      fill={fill}
      stroke="#0d0c0a"
      strokeWidth={frame}
    />
  )
}

function WallWindow({ x, y, w, h, slope }: WallPanelProps) {
  const half = w / 2
  return (
    <g>
      <WallPanel x={x} y={y} w={w} h={h} slope={slope} fill="#2a1a14" frame={6} />
      <WallPanel x={x + 6} y={y + 8 + 6 * slope} w={half - 9} h={h * 0.3} slope={slope} fill="#b9c0c8" frame={2} />
      <WallPanel x={x + half + 4} y={y + 8 + (half + 4) * slope} w={half - 9} h={h * 0.3} slope={slope} fill="#8a9199" frame={2} />
      <WallPanel x={x + 4} y={y + h * 0.66 + 4 * slope} w={w - 8} h={h * 0.26} slope={slope} fill="#c97a4c" frame={2} />
    </g>
  )
}

// Window in an outside face, seen with its sill and a dark reveal.
function SillWindow({ x, y }: { x: number; y: number }) {
  const s = 0.93
  return (
    <g>
      <WallPanel x={x} y={y} w={82} h={36} slope={s} fill="#1d1917" frame={6} />
      <WallPanel x={x + 6} y={y + 14} w={32} h={16} slope={s} fill="#b8734c" frame={2} />
      <WallPanel x={x + 44} y={y + 46} w={32} h={20} slope={s} fill="#d98656" frame={2} />
      <path d={`M${x + 48} ${y + 56}l28 26M${x + 10} ${y + 4}l28 26`} stroke="#6d4936" strokeWidth={3} />
    </g>
  )
}

function Closet({ x, y, w, h }: { x: number; y: number; w: number; h: number }) {
  const s = 0.93
  return (
    <g fill="none" stroke="#0d0c0a">
      <polygon points={toPoints([[x, y], [x + w, y + w * s], [x + w, y + w * s + h], [x, y + h]])} fill="#41423c" strokeWidth={4} />
      <polygon points={toPoints([[x, y + h * 0.7], [x + w, y + w * s + h * 0.4], [x + w, y + w * s + h], [x, y + h]])} fill="#5c5d55" strokeWidth={2} />
      <path d={`M${x + w / 2} ${y + (w / 2) * s}v${h}M${x} ${y}v${h}M${x + w} ${y + w * s}v${h}`} strokeWidth={7} />
      <path d={`M${x} ${y}l${w} ${w * s}`} stroke="#8a5a44" strokeWidth={3} />
    </g>
  )
}

function Bed({ x, y, len, wide, thick = 14 }: { x: number; y: number; len: number; wide: number; thick?: number }) {
  // x,y is the left corner; `wide` runs up-right, `len` runs down-right
  const a: Point = [x, y]
  const b: Point = [x + wide, y - wide * 0.8]
  const c: Point = [b[0] + len, b[1] + len * 0.9]
  const d: Point = [x + len, y + len * 0.9]
  return (
    <g stroke="#15150f" strokeWidth={3}>
      <polygon points={toPoints([a, d, c, [c[0], c[1] + thick], [d[0], d[1] + thick], [a[0], a[1] + thick]])} fill="#a5a593" />
      <polygon points={toPoints([a, b, c, d])} fill="#eeefe0" />
    </g>
  )
}

const bigRooms: { outline: Point[]; back: Point[] }[] = [
  { outline: [[362, 174], [545, 28], [688, 168], [505, 312]], back: [[362, 174], [545, 28], [688, 168]] },
  { outline: [[650, 210], [700, 168], [855, 315], [765, 385], [640, 262]], back: [[640, 222], [700, 168], [855, 315]] },
  { outline: [[540, 335], [630, 265], [762, 385], [675, 465]], back: [[540, 335], [630, 265], [762, 385]] },
  { outline: [[730, 432], [857, 320], [948, 402], [812, 512]], back: [[730, 432], [857, 320], [948, 402]] },
  { outline: [[682, 468], [728, 434], [808, 512], [758, 550]], back: [[682, 468], [728, 434], [808, 512]] },
  { outline: [[330, 294], [408, 234], [756, 553], [682, 612]], back: [[330, 294], [408, 234], [756, 553]] },
  { outline: [[76, 402], [262, 248], [385, 380], [208, 522]], back: [[76, 402], [262, 248], [385, 380]] },
  { outline: [[212, 525], [385, 392], [515, 505], [345, 652]], back: [[212, 525], [385, 392], [515, 505]] },
  { outline: [[350, 660], [520, 515], [660, 636], [485, 788]], back: [[350, 660], [520, 515], [660, 636]] },
  { outline: [[500, 806], [955, 412], [1172, 612], [692, 990]], back: [[500, 806], [955, 412], [1172, 612]] },
]

const smallRooms: { outline: Point[]; back: Point[] }[] = [
  { outline: [[264, 212], [432, 68], [580, 215], [415, 352]], back: [[264, 212], [432, 68], [580, 215]] },
  { outline: [[142, 310], [258, 220], [408, 362], [294, 452]], back: [[142, 310], [258, 220], [408, 362]] },
  { outline: [[470, 322], [588, 222], [665, 297], [548, 393]], back: [[470, 322], [588, 222], [665, 297]] },
  { outline: [[554, 400], [670, 303], [753, 382], [636, 476]], back: [[554, 400], [670, 303], [753, 382]] },
  { outline: [[640, 482], [758, 388], [876, 492], [700, 622]], back: [[640, 482], [758, 388], [876, 492]] },
  { outline: [[424, 360], [465, 326], [635, 482], [630, 555], [585, 515]], back: [[424, 360], [465, 326], [635, 482]] },
  { outline: [[76, 648], [415, 368], [580, 524], [458, 620], [516, 690], [302, 862]], back: [[76, 648], [415, 368], [580, 524]] },
  { outline: [[462, 622], [585, 528], [693, 630], [572, 732], [524, 690]], back: [[462, 622], [585, 528], [693, 630]] },
]

const stools: Point[] = [[875, 632], [901, 656], [927, 682], [953, 707], [980, 732]]
const chairs: Point[] = [[845, 738], [876, 766], [906, 792], [778, 792], [808, 822], [840, 850]]
const frontPosts: Point[] = [[852, 1120], [997, 996], [1143, 875], [1295, 748]]

function railPosts(from: Point, to: Point, count: number, height: number) {
  let d = ""
  for (let i = 0; i <= count; i++) {
    const x = from[0] + ((to[0] - from[0]) * i) / count
    const y = from[1] + ((to[1] - from[1]) * i) / count
    d += `M${x.toFixed(1)} ${y.toFixed(1)}v${height}`
  }
  return d
}

function VillaLarge() {
  return (
    <g transform="translate(660 200) scale(.333333)" stroke="#15150f" strokeWidth={3} strokeLinejoin="round">
      {/* deck */}
      <polygon points="700,1075 1190,670 1335,800 845,1215" fill="url(#deck)" />
      {/* outer walls */}
      <polygon points="340,170 410,232 410,300 340,265" fill="#3b3c3c" />
      <polygon points="55,405 700,1000 700,1105 55,497" fill="url(#outer)" />
      <polygon points="700,1000 1190,605 1190,690 720,1078 700,1085" fill="#5c5d55" />
      {/* wall tops */}
      <polygon
        points="340,168 515,24 578,24 960,392 1190,605 1190,620 704,1006 55,412 55,398 262,238 325,292 402,230"
        fill="#65665f"
      />
      {bigRooms.map((room, i) => <Room key={i} {...room} drop={88} />)}
      <g fill="none" strokeWidth={2}>
        {bigRooms.map((room, i) => <polygon key={i} points={toPoints(room.outline)} />)}
      </g>
      {/* glazed wall behind the kitchen */}
      <polygon points="962,402 1175,606 1160,640 985,480" fill="#fff" stroke="none" />
      <path d="M962 402L1175 606M975 440L1170 622M985 468L1162 640M998 430v62M1040 475v64M1084 515v66M1128 560v56" stroke="#111" strokeWidth={6} fill="none" />
      <polygon points="1160,615 1190,602 1190,700 1160,718" fill="#85877a" />
      <polygon points="325,668 350,660 350,775 325,750" fill="#74766a" />
      <polygon points="852,872 880,858 882,945 858,968" fill="#7c7e72" />
      <polygon points="262,248 275,242 278,262 264,266" fill="#8c8e80" />
      {/* doors */}
      <WallPanel x={345} y={302} w={42} h={62} slope={-0.8} fill="#8b4f3a" />
      <WallPanel x={462} y={298} w={36} h={68} slope={0.93} />
      <WallPanel x={536} y={370} w={40} h={66} slope={0.93} />
      <WallPanel x={698} y={524} w={36} h={66} slope={0.93} />
      <WallPanel x={660} y={208} w={36} h={66} slope={-0.8} fill="#7a4634" />
      <WallPanel x={868} y={492} w={44} h={66} slope={-0.8} fill="#7a4634" />
      <WallPanel x={344} y={358} w={32} h={44} slope={0.93} />
      <WallPanel x={472} y={480} w={32} h={46} slope={0.93} />
      <WallPanel x={614} y={610} w={34} h={46} slope={0.93} />
      <WallPanel x={902} y={378} w={26} h={44} slope={0.93} />
      <WallPanel x={742} y={230} w={34} h={26} slope={0.93} fill="#7b7d72" frame={4} />
      <path d="M686 706v-66l56-44v62M505 310l130-98M572 262v42" strokeWidth={8} fill="none" />
      <path d="M508 308l125-94" stroke="#8a5a44" strokeWidth={3} fill="none" />
      {/* closets */}
      <Closet x={236} y={286} w={68} h={78} />
      <Closet x={370} y={410} w={68} h={80} />
      <Closet x={502} y={540} w={72} h={80} />
      <path d="M390 152v62M430 186v62M388 152l84 78" strokeWidth={6} fill="none" />
      {/* windows */}
      <WallWindow x={430} y={130} w={86} h={38} slope={-0.8} />
      <WallWindow x={608} y={104} w={68} h={40} slope={0.93} />
      <WallWindow x={108} y={388} w={90} h={42} slope={-0.72} />
      <SillWindow x={108} y={480} />
      <SillWindow x={243} y={612} />
      <SillWindow x={382} y={742} />
      {/* beds */}
      <Bed x={432} y={186} len={80} wide={86} thick={10} />
      <path d="M446 196l84-72" />
      <polygon points="520,105 540,96 548,112 530,124" fill="#eeefe0" />
      <polygon points="412,200 424,192 424,214 412,222" fill="#eeefe0" />
      <Bed x={118} y={440} len={40} wide={42} />
      <Bed x={250} y={566} len={40} wide={42} />
      <Bed x={388} y={694} len={40} wide={42} />
      {/* bathroom */}
      <polygon points="606,345 628,330 690,384 660,410" fill="#201c19" />
      <polygon points="606,345 628,330 640,342 618,358" fill="#f0956a" />
      <polygon points="645,385 664,368 680,382 660,400" fill="#f0956a" />
      <ellipse cx="682" cy="425" rx="19" ry="13" fill="#eeefe0" />
      <ellipse cx="695" cy="402" rx="13" ry="12" fill="#eeefe0" />
      {/* kitchen */}
      <polygon points="925,445 945,428 988,462 988,490 960,530 928,505" fill="#34352f" />
      <polygon points="925,448 945,428 988,462 968,484" fill="#55564e" />
      <polygon points="964,528 985,508 1062,574 1042,598" fill="#f9a074" />
      <polygon points="1042,598 1062,574 1092,600 1070,622" fill="#1a1a18" />
      <polygon points="1078,635 1098,612 1130,634 1110,660" fill="#f9a074" />
      <path d="M964 532v16l112 94" fill="none" strokeWidth={6} />
      <polygon points="878,606 918,575 1042,690 1004,728" fill="#f9a074" />
      <polygon points="1004,728 1042,690 1042,706 1016,732" fill="#efe4d8" />
      <polygon points="936,622 975,618 992,640 972,668 946,650" fill="#1d1d1b" />
      <polygon points="956,580 974,584 976,628 956,620" fill="#33342f" />
      <polygon points="950,640 976,625 992,636 968,654" fill="#4d4e47" />
      {stools.map(([x, y]) => (
        <g key={x}>
          <path d={`M${x} ${y + 4}v18M${x - 8} ${y + 22}h16`} strokeWidth={6} />
          <ellipse cx={x} cy={y} rx="11" ry="9" fill="#f3c9a5" strokeWidth={4} />
        </g>
      ))}
      {/* dining */}
      <polygon points="780,748 810,728 890,808 856,834" fill="#6d6e64" strokeWidth={5} />
      <path d="M790 754l76 74M800 742l78 76M796 768l30-22M816 786l30-22M836 804l30-22" strokeWidth={3} />
      {chairs.map(([x, y]) => (
        <g key={x} strokeWidth={5}>
          <path d={`M${x - 14} ${y}v22M${x + 14} ${y + 4}v20M${x} ${y + 10}v22`} />
          <polygon points={toPoints([[x - 14, y], [x + 2, y - 12], [x + 16, y + 2], [x, y + 14]])} fill="#8f8461" />
          <path d={`M${x} ${y - 26}l18 14v12l-18-14z`} fill="#3a362c" />
        </g>
      ))}
      {/* lounge */}
      <polygon points="574,855 662,782 700,815 700,832 612,902 578,872" fill="#1c1c1b" />
      <path d="M590 862l76-62M622 832l34 30M606 872l82-64" stroke="#3f403d" strokeWidth={3} />
      <polygon points="638,888 692,846 738,880 684,925" fill="#e8835c" strokeWidth={4} />
      <polygon points="656,888 692,860 720,880 684,910" fill="#f9a074" />
      <path d="M642 890v18M676 922v16M734 882v16" stroke="#8b3f26" strokeWidth={7} />
      <polygon points="678,955 765,880 800,912 800,925 712,990 684,975" fill="#1c1c1b" />
      <path d="M696 958l78-62M730 930l22 20" stroke="#3f403d" strokeWidth={3} />
      {/* front glazing */}
      <path d="M740 1006v56l52-42v-56zM796 962v56l52-42v-56zM886 882v56l52-42v-56zM944 840v54l52-42v-56zM1034 764v56l52-42v-56zM1090 718v54l52-42v-52z" fill="#66675e" strokeWidth={4} />
      <path d="M794 958v64M850 914v60M942 836v64M998 790v64M1088 716v64M1142 674v60" strokeWidth={7} />
      <path d="M1190 605v98M704 1005v98M672 978v104" fill="none" />
      {/* deck railing */}
      <polygon points="700,1075 845,1213 1335,800 1335,834 845,1247 700,1105" fill="#8b8c84" stroke="none" />
      <path d={railPosts([700, 1075], [845, 1213], 12, 34)} strokeWidth={6} />
      <path d={railPosts([845, 1213], [1335, 800], 40, 34)} strokeWidth={6} />
      <path d={railPosts([1190, 665], [1335, 800], 12, 34)} strokeWidth={5} />
      <path d="M700 1075l145 138L1335 800M700 1106l145 140L1335 834M1190 665l145 135v34" fill="none" strokeWidth={5} />
      {frontPosts.map(([x, y]) => (
        <rect key={x} x={x - 6} y={y} width="12" height="84" rx="5" fill="#6f7066" strokeWidth={4} />
      ))}
    </g>
  )
}

function VillaSmall() {
  return (
    <g transform="translate(490 450) scale(.333333)" stroke="#15150f" strokeWidth={3} strokeLinejoin="round">
      <polygon points="122,308 290,455 228,500 122,398" fill="url(#outer)" />
      <polygon points="55,645 305,878 305,962 55,732" fill="url(#outer)" />
      <polygon points="305,878 525,700 580,740 890,482 890,575 575,835 360,1005 305,962" fill="#55564f" />
      <polygon points="432,50 890,482 575,740 522,698 305,880 55,648 232,495 288,455 122,308" fill="#65665f" />
      {smallRooms.map((room, i) => <Room key={i} {...room} drop={84} />)}
      <g fill="none" strokeWidth={2}>
        {smallRooms.map((room, i) => <polygon key={i} points={toPoints(room.outline)} />)}
      </g>
      {/* porch */}
      <polygon points="308,935 520,785 572,808 360,975" fill="#66675e" />
      <polygon points="520,704 575,742 575,830 520,788" fill="#3a3b36" />
      <path d="M305 935l55 40v28M360 975l215-170M305 878v84" fill="none" />
      <WallPanel x={536} y={738} w={28} h={56} slope={0.7} fill="#7a4634" />
      <WallPanel x={544} y={752} w={12} h={36} slope={0.7} fill="#9a9c90" frame={3} />
      <path d="M370 846v60l44-34v-60zM418 808v58l44-36v-60z" fill="#66675e" strokeWidth={6} />
      <WallPanel x={618} y={730} w={58} h={40} slope={-0.72} fill="#4a3029" frame={7} />
      <path d="M632 718v46M646 708v46M660 698v44M618 752l58-44" strokeWidth={7} />
      {/* doors */}
      <polygon points="92,654 134,620 134,684 124,684" fill="#7a4634" strokeWidth={5} />
      <WallPanel x={372} y={412} w={40} h={68} slope={-0.8} fill="#7a4634" />
      <WallPanel x={436} y={374} w={26} h={46} slope={-0.8} fill="#7a4634" />
      <WallPanel x={474} y={352} w={34} h={50} slope={0.9} />
      <WallPanel x={520} y={438} w={28} h={38} slope={-0.7} fill="#7a4634" />
      <WallPanel x={594} y={460} w={36} h={60} slope={0.9} />
      <WallPanel x={480} y={630} w={26} h={40} slope={-0.8} fill="#7a4634" />
      <path d="M432 456v-66l50 46v70" fill="none" strokeWidth={8} />
      {/* windows */}
      <WallWindow x={316} y={186} w={66} h={38} slope={-0.75} />
      <WallWindow x={782} y={424} w={62} h={40} slope={0.9} />
      <WallPanel x={614} y={262} w={32} h={24} slope={0.9} fill="#8d9084" frame={4} />
      <WallPanel x={698} y={344} w={32} h={24} slope={0.9} fill="#8d9084" frame={4} />
      <WallPanel x={194} y={290} w={20} h={24} slope={-0.8} fill="#d98656" frame={4} />
      {/* bedrooms */}
      <polygon points="390,170 428,136 440,148 400,186" fill="#1a1512" />
      <Bed x={396} y={182} len={78} wide={42} thick={10} />
      <path d="M410 192l38-34" />
      <polygon points="372,190 388,176 400,186 400,200 386,210 372,200" fill="#eeefe0" />
      <polygon points="312,236 328,224 342,236 342,248 328,258 312,248" fill="#eeefe0" />
      <polygon points="446,304 556,218 566,228 456,316" fill="#eeefe0" />
      <polygon points="306,250 314,244 388,312 388,322 380,322" fill="#eeefe0" />
      <Bed x={704} y={546} len={46} wide={70} thick={8} />
      <polygon points="768,490 784,480 802,500 786,512" fill="#eeefe0" />
      <polygon points="788,512 804,500 822,520 806,532" fill="#eeefe0" />
      <polygon points="748,474 766,462 782,474 780,484 764,494" fill="#eeefe0" />
      <polygon points="650,568 658,566 706,606 706,618 698,616" fill="#eeefe0" />
      {/* kitchen */}
      <polygon points="225,246 260,226 300,250 290,276 262,268 244,300 226,284" fill="#f8f8f8" />
      <polygon points="282,270 298,262 320,282 318,314 300,328 274,300" fill="#f0f1f3" />
      <path d="M278 286v28M288 292v30" stroke="#1c1c80" strokeWidth={5} />
      <polygon points="222,306 236,298 270,314 306,340 296,356 262,334 238,328" fill="#f08a5a" />
      <polygon points="244,282 270,276 274,300 250,306" fill="#7d7f7c" />
      <polygon points="300,352 320,346 350,376 336,390" fill="#1a1a18" />
      <polygon points="338,336 356,322 370,334 368,366 348,378 340,368" fill="#eef0f1" />
      <polygon points="336,390 350,374 368,382 360,396 344,402" fill="#f08a5a" />
      <path d="M324 288v50l12 12v-50z" fill="#3a3b36" />
      <polygon points="155,312 176,294 204,314 202,332 184,344" fill="#f8f8f8" />
      <polygon points="190,348 206,338 236,364 220,380" fill="#f8f8f8" />
      <polygon points="228,384 244,374 276,402 262,416" fill="#f8f8f8" />
      <polygon points="260,420 276,406 308,438 294,448" fill="#f8f8f8" />
      {/* baths */}
      <ellipse cx="532" cy="344" rx="14" ry="12" fill="#8d9084" strokeWidth={6} />
      <ellipse cx="618" cy="322" rx="10" ry="8" fill="#eeefe0" />
      <ellipse cx="602" cy="346" rx="10" ry="7" fill="#c9cab8" />
      <ellipse cx="624" cy="438" rx="25" ry="22" fill="#8f8461" />
      <ellipse cx="626" cy="442" rx="18" ry="13" fill="#eee3c0" />
      <ellipse cx="708" cy="400" rx="12" ry="10" fill="#eeefe0" />
      <ellipse cx="690" cy="424" rx="14" ry="10" fill="#d9d9c6" />
      {/* dining and sitting */}
      <path d="M444 548l16-10v26l-14 8zM500 540l18 10v22l-16-8zM440 590l30-6v20l-22 4z" fill="#3a362c" strokeWidth={5} />
      <ellipse cx="480" cy="572" rx="32" ry="24" fill="#ece0c8" />
      <polygon points="190,705 262,660 286,684 284,702 224,752 190,732" fill="#c9c8b0" />
      <polygon points="206,712 262,674 278,690 222,734" fill="#eeeddb" />
      <path d="M236 694l16 18" />
      <polygon points="256,762 296,726 352,772 312,808" fill="#e8835c" strokeWidth={4} />
      <polygon points="270,762 296,740 338,772 312,794" fill="#f9a074" />
      <path d="M260 764v16M310 806v18M350 774v18" stroke="#8b3f26" strokeWidth={7} />
      <polygon points="514,650 544,626 576,656 570,676 536,692" fill="#1c1c1b" />
      <polygon points="598,656 626,630 656,658 644,680 620,688" fill="#1c1c1b" />
      <polygon points="566,626 586,612 610,630 590,648" fill="#e8835c" strokeWidth={5} />
      <path d="M586 612v46" strokeWidth={5} />
      <ellipse cx="590" cy="696" rx="20" ry="15" fill="#eeefe0" />
    </g>
  )
}

function ViewCube() {
  return (
    <g transform="translate(1220 180) scale(.333333)" stroke="#9b9fa5" strokeWidth={2} fontFamily="Noto Sans, sans-serif">
      <ellipse cx="257" cy="343" rx="134" ry="122" fill="none" stroke="#f1f1f1" strokeWidth={33} />
      <ellipse cx="257" cy="343" rx="150" ry="138" fill="none" strokeDasharray="5 3" stroke="#b5b8bc" />
      <ellipse cx="257" cy="343" rx="117" ry="105" fill="none" strokeDasharray="5 3" stroke="#c5c8cc" />
      <ellipse cx="257" cy="372" rx="76" ry="38" fill="#ececec" stroke="none" opacity="0.700" />
      <polygon points="170,272 252,355 252,402 175,318" fill="#ececed" />
      <polygon points="343,280 252,355 252,402 338,328" fill="#dfe0e2" />
      <polygon points="258,205 343,280 252,355 170,272" fill="#f4f5f6" />
      <polygon points="257,228 310,276 254,322 202,270" fill="#e3e7ec" stroke="none" />
      <g stroke="none" fill="#7c8086" textAnchor="middle" fontWeight="600">
        <text x="256" y="286" fontSize="32" transform="rotate(-38 256 274)">TOP</text>
        <text x="214" y="346" fontSize="18" transform="rotate(42 214 338)">LEFT</text>
        <text x="296" y="350" fontSize="19" transform="rotate(-38 296 342)">FRONT</text>
      </g>
      <g fill="#e2e2e2" stroke="#8f9399" textAnchor="middle" fontWeight="700" fontSize="42">
        <text x="168" y="260" transform="rotate(48 168 246)">N</text>
        <text x="352" y="266" transform="rotate(-55 352 252)">E</text>
        <text x="150" y="436" fontSize="50" transform="rotate(-38 150 420)">W</text>
        <text x="358" y="446" fontSize="50" transform="rotate(38 358 430)">S</text>
      </g>
    </g>
  )
}

function ModelCanvas() {
  return (
    <svg viewBox="235 207 1144 578" preserveAspectRatio="xMidYMin slice" className="min-h-0 min-w-0 flex-1 bg-white" role="img" aria-label="3D model">
      <defs>
        <linearGradient id="floor" x1="0" y1="0" x2="1" y2="1">
          <stop offset="0" stopColor="#54554c" />
          <stop offset="0.600" stopColor="#6f7066" />
          <stop offset="1" stopColor="#5e5f56" />
        </linearGradient>
        <linearGradient id="deck" x1="0" y1="1" x2="1" y2="0">
          <stop offset="0" stopColor="#606158" />
          <stop offset="0.500" stopColor="#7a7b70" />
          <stop offset="1" stopColor="#606158" />
        </linearGradient>
        <linearGradient id="wallLeft" x1="0" y1="0" x2="1" y2="0">
          <stop offset="0" stopColor="#4e4f49" />
          <stop offset="1" stopColor="#3a3b36" />
        </linearGradient>
        <linearGradient id="wallRight" x1="0" y1="0" x2="1" y2="1">
          <stop offset="0" stopColor="#383934" />
          <stop offset="1" stopColor="#282926" />
        </linearGradient>
        <linearGradient id="outer" x1="0" y1="0" x2="1" y2="1">
          <stop offset="0" stopColor="#4c4f50" />
          <stop offset="0.500" stopColor="#333536" />
          <stop offset="1" stopColor="#3f4142" />
        </linearGradient>
      </defs>
      <g stroke="#444" fill="none" strokeWidth="1">
        <path d="M373 212L236 328M433 208L235 371" strokeDasharray="14 6" />
        <path d="M890 208L1115 423L1193 497M925 214L1193 470" strokeDasharray="34 10 14 10" />
      </g>
      <VillaLarge />
      <VillaSmall />
      <ViewCube />
    </svg>
  )
}

// ─── View area ────────────────────────────────────────────────────────────────

const viewControls: ReactNode[] = [
  <><path d="M1 2h15v13H1z" fill="#d7dade" strokeWidth={1.800} /><path d="M1 6h4v3H1zM12 6h4v3h-4zM5 12h7v3H5z" fill="#777" strokeWidth={1} /></>,
  <><path d="M1 7l5-5h10v8l-4 5H1z" fill="#7cc4ee" stroke="#2a72b0" /><path d="M1 7h11v3H1z" fill="#6cc06c" /><path d="M12 7v8M12 7l4-5" /></>,
  <><circle cx="7" cy="7" r="4" fill="#fbd25a" stroke="#d09a1c" /><path d="M7 0v2M0 7h2M2 2l1 1M12 2l-1 1M2 12l1-1" stroke="#d09a1c" /><path d="M9 9l7 7M16 9l-7 7" stroke="#cc2a1e" strokeWidth={2.500} /></>,
  <><circle cx="8" cy="7" r="5" fill="#cfe4f6" stroke="#5a88b8" /><path d="M2 14h6" /><path d="M9 9l7 7M16 9l-7 7" stroke="#cc2a1e" strokeWidth={2.500} /></>,
  <><path d="M3 6c2-2 7-2 9 0v7c-3 2-6 2-8 0L1 6M7 4V2" fill="#e3e6ea" /><circle cx="13" cy="9" r="3" fill="#bfe0fa" stroke="#3f8fe0" /><path d="M13 12v3" stroke="#3f6fb0" strokeWidth={2} /></>,
  <><path d="M5 4v10M5 5h9v4M1 11h4M13 1v4" stroke="#4a6ea8" strokeWidth={2.500} /><path d="M9 8l7 7M16 8l-7 7" stroke="#cc2a1e" strokeWidth={2.500} /></>,
  <><path d="M5 4v10M5 5h6M1 11h4M8 14h3" stroke="#4a6ea8" strokeWidth={2.500} /><circle cx="13" cy="6" r="3" fill="#bfe0fa" stroke="#3f8fe0" /><path d="M13 9v4" stroke="#3f6fb0" strokeWidth={2} /><path d="M7 9h3" stroke="#cc2a1e" /></>,
  <><path d="M1 7l6-5 6 3 3 4-3 1v5l-9 0-2-7z" fill="#e3e6ea" /><path d="M9 10h7v5H9z" fill="#8fc7b0" /><path d="M10 10V8c0-2 4-2 4 0v2" /></>,
  <><circle cx="5" cy="10" r="3" fill="#eee" /><circle cx="12" cy="12" r="3" fill="#eee" /><path d="M2 9L1 4M15 11l1-7M8 11h1" /></>,
  <><circle cx="8" cy="6" r="3" fill="#bfe0fa" stroke="#3f8fe0" strokeWidth={1.600} /><path d="M8 10v4" stroke="#3f6fb0" strokeWidth={3} /></>,
  <><path d="M2 3h12v11H2z" strokeDasharray="2 1" strokeWidth={2} fill="#e6e6e6" /><circle cx="13" cy="13" r="3" fill="#999" /></>,
  <><path d="M1 6l5-4h8v8l-4 5H1z" fill="#d7dade" /><path d="M2 9h6v6H2zM5 9v6M2 12h6" stroke="#cc2a1e" strokeWidth={1.600} /><circle cx="13" cy="6" r="3" fill="#bfe0fa" stroke="#3f8fe0" /><path d="M13 9v5" stroke="#3f6fb0" strokeWidth={2} /></>,
  <><path d="M1 7l3-3h8v8l-3 3H1zM1 7h8v8M9 7l3-3M6 4V2h9v8h-3" fill="#c9cdd4" /></>,
  <><path d="M1 1v6M16 1v6M1 4h15M1 15h8" strokeDasharray="3 1" /><path d="M10 11h6v4h-6z" fill="#777" /><path d="M11 11V9h4v2" /></>,
]

function ViewArea() {
  return (
    <main className="flex min-w-0 flex-1 flex-col border-x-2 border-[#e4e4e4]">
      <div className="flex h-[21px] shrink-0 items-center bg-[#cbcbcb] text-[12px] text-[#3c3c3c]">
        <button className="flex w-[132px] items-center gap-[7px] pl-[4px] text-[#5a5a5a]">
          <HouseIcon size={16} />{"{3D}"}
        </button>
        <div className="flex h-full w-[134px] items-center gap-[8px] bg-[#f0f0f0] pr-[5px] pl-[5px]">
          <HouseIcon size={16} /><span className="flex-1 font-medium text-[#222]">{"{3D}"}</span>
          <button aria-label="Close view"><CloseX size={11} /></button>
        </div>
        <button aria-label="View list" className="mr-[6px] ml-auto">
          <svg width="9" height="8" viewBox="0 0 9 8" aria-hidden="true"><path d="M0 0h9v1H0zM0 3h9L4.500 8z" fill="#333" /></svg>
        </button>
      </div>
      <div className="flex min-h-0 flex-1 bg-white">
        <ModelCanvas />
        <div className="mr-[3px] flex w-[16px] shrink-0 items-center justify-center bg-[#efefef]">
          <span className="h-[16px] w-[2px] bg-[#7a7a7a]" />
        </div>
      </div>
      <div className="flex h-[19px] shrink-0 items-center bg-[#efefef] pb-[2px] pl-[23px] text-[12px] text-[#2b2b2b]">
        <button className="w-[55px] text-left whitespace-nowrap">1 : 100</button>
        <div className="flex w-[286px] shrink-0 items-center justify-between">
          {viewControls.map((glyph, i) => <Icon key={i} size={17} box={17}>{glyph}</Icon>)}
        </div>
        <span className="mr-auto ml-[384px] h-[2px] w-[17px] bg-[#7a7a7a]" />
        <svg width="10" height="10" viewBox="0 0 10 10" className="mr-[4px] self-end" aria-hidden="true">
          <path d="M8 0h2v2H8zM8 4h2v2H8zM8 8h2v2H8zM4 4h2v2H4zM4 8h2v2H4zM0 8h2v2H0z" fill="#b5b5b5" />
        </svg>
      </div>
    </main>
  )
}

// ─── Project browser ──────────────────────────────────────────────────────────

interface TreeNode {
  label: string
  depth: 0 | 1 | 2
  icon?: "views" | "plan" | "legend" | "schedule" | "sheet" | "family" | "group" | "link"
  toggle?: "+" | "-"
  last?: boolean
}

const tree: TreeNode[] = [
  { label: "Views (all)", depth: 0, icon: "views", toggle: "-" },
  { label: "Floor Plans", depth: 1, toggle: "-" },
  { label: "00GROUND", depth: 2, icon: "plan" },
  { label: "Site", depth: 2, icon: "plan", last: true },
  { label: "Ceiling Plans", depth: 1, toggle: "-" },
  { label: "00GROUND", depth: 2, icon: "plan", last: true },
  { label: "3D Views", depth: 1, toggle: "+" },
  { label: "Elevations (Building Elevation)", depth: 1, toggle: "-" },
  { label: "East", depth: 2, icon: "plan" },
  { label: "North", depth: 2, icon: "plan" },
  { label: "South", depth: 2, icon: "plan" },
  { label: "West", depth: 2, icon: "plan", last: true },
  { label: "Legends", depth: 0, icon: "legend" },
  { label: "Schedules/Quantities (all)", depth: 0, icon: "schedule" },
  { label: "Sheets (all)", depth: 0, icon: "sheet" },
  { label: "Families", depth: 0, icon: "family", toggle: "+" },
  { label: "Groups", depth: 0, icon: "group", toggle: "+" },
  { label: "Revit Links", depth: 0, icon: "link", last: true },
]

const treeIcons: Record<NonNullable<TreeNode["icon"]>, ReactNode> = {
  views: <><path d="M4 1H1v4M1 11v4h3M12 1h3v4M15 11v4h-3" strokeWidth={1.600} /><path d="M5 6l2-2h5v5l-2 3H5z" fill={STEEL} /></>,
  plan: <><path d="M0.500 0.500h15v15H0.500z" strokeDasharray="3 1" strokeWidth={1} stroke="#888" /><path d="M3 3h10v10H3z" fill="#f6f7f8" strokeWidth={1.600} /></>,
  legend: <><path d="M1 1h14v14H1z" fill="#eee" stroke="#999" /><path d="M1 2h14" strokeWidth={2} /><path d="M3 6h3v2H3zM8 6h5v2H8zM3 11h3v2H3zM8 11h2v2H8zM11 11h2v2h-2z" fill="#555" strokeWidth={0.500} /></>,
  schedule: <><path d="M0.500 3h15v11h-15z" fill="#eee" stroke="#999" /><path d="M0 3h16" strokeWidth={3} /><path d="M0 8h16M0 11h16M5 5v9M10 5v9" stroke="#aaa" strokeWidth={0.800} /></>,
  sheet: <><path d="M1 2h11l3 3v10H1z" fill="#e3e6ea" strokeWidth={1.600} /><path d="M4 6h5v3h3v3M4 6v6h4" stroke="#5a88b8" /></>,
  family: <><path d="M1 1h8v8H1zM11 1h4v14H1v-4h10z" fill="#e3e6ea" strokeWidth={1.500} /></>,
  group: <><path d="M4 1H1v14h3M12 1h3v14h-3" strokeWidth={1.600} /><circle cx="7" cy="7" r="3" fill="#cfd3d9" /><circle cx="10" cy="9" r="3" fill="#b7bdc9" /></>,
  link: <><rect x="1" y="5" width="7" height="6" rx="3" stroke="#c08a14" fill="#f5d77a" strokeWidth={2} /><rect x="8" y="5" width="7" height="6" rx="3" stroke="#c08a14" fill="#f5d77a" strokeWidth={2} /></>,
}

// Dotted branch line; the lower half is left out for the last child.
function Branch({ last, className }: { last?: boolean; className: string }) {
  return (
    <span className={clsx("flex shrink-0 flex-col self-stretch", className)}>
      <span className="flex-1 border-b border-l border-dotted border-[#999]" />
      <span className={clsx("flex-1", !last && "border-l border-dotted border-[#999]")} />
    </span>
  )
}

function TreeRow({ node, index }: { node: TreeNode; index: number }) {
  return (
    <li className="flex min-h-0 flex-1 items-center whitespace-nowrap">
      {node.depth > 0 && (
        <span className="ml-[5px] w-[17px] shrink-0 self-stretch border-l border-dotted border-[#999]" />
      )}
      {node.depth === 2 && (
        <span className={clsx("ml-[5px] w-[21px] shrink-0 self-stretch", index < 7 && "border-l border-dotted border-[#999]")} />
      )}
      {node.toggle ? (
        <>
          <button aria-label={node.toggle === "-" ? "Collapse" : "Expand"} className="flex size-[11px] shrink-0 items-center justify-center border border-[#8b8f96] bg-[#f5f6f8]">
            <svg width="7" height="7" viewBox="0 0 7 7" stroke="#3b4f80" aria-hidden="true">
              <path d={node.toggle === "-" ? "M0 3.500h7" : "M0 3.500h7M3.500 0v7"} />
            </svg>
          </button>
          <span className={clsx("w-[8px] shrink-0 border-t border-dotted border-[#999]", node.depth === 1 && "mr-[3px]")} />
        </>
      ) : (
        <Branch last={node.last} className={node.depth === 0 ? "ml-[5px] w-[14px]" : "w-[14px]"} />
      )}
      {node.icon && <Icon size={16} box={16} className="mr-[4px]">{treeIcons[node.icon]}</Icon>}
      <span className={clsx("px-[2px] leading-[17px]", index === 0 && "bg-[#e1e1e1]")}>{node.label}</span>
    </li>
  )
}

function ProjectBrowser() {
  return (
    <aside className="flex w-[183px] shrink-0 flex-col bg-[#f0f0f0] text-[12px] text-[#2b2b2b]">
      <div className="flex h-[20px] shrink-0 items-center justify-between pt-px pr-[7px] pl-[3px]">
        <h2 className="whitespace-nowrap text-[#444]">Project Browser - task1</h2>
        <button aria-label="Close project browser"><CloseX /></button>
      </div>
      <div className="mr-[4px] min-h-0 flex-1 overflow-hidden bg-white">
        <ul className="flex h-[330px] flex-col pl-[5px]">
          {tree.map((node, i) => <TreeRow key={i} node={node} index={i} />)}
        </ul>
      </div>
      <div className="flex h-[19px] shrink-0 items-center">
        <span className="ml-[19px] h-[2px] w-[112px] bg-[#8a8a8a]" />
      </div>
    </aside>
  )
}

// ─── Status bar ───────────────────────────────────────────────────────────────

const cursor = <path d="M8 5v10l2-2 2 4 2-1-2-4h3z" fill="#fff" stroke="#333" strokeWidth={1} />

const selectionIcons: ReactNode[] = [
  <><path d="M1 3h6v4H1zM9 3h6v4H9z" fill="#fbd25a" stroke="#c08a14" strokeWidth={1.800} />{cursor}</>,
  <><path d="M1 9l6-6h5L7 9zM1 13l5-4" stroke="#3f8fe0" fill="#cfe4f6" /><path d="M10 1l6 5M16 1l-6 5" stroke="#cc2a1e" strokeWidth={2.500} />{cursor}</>,
  <><path d="M2 1h9l-2 4 3 4H1l2-4z" fill="#f08a3a" stroke="#b9541c" /><path d="M6 9v7" stroke="#b9541c" />{cursor}</>,
  <><path d="M1 5l7-3v10l-7 3z" fill="#b5dcf5" stroke="#3f8fe0" /><path d="M10 1l6 5M16 1l-6 5" stroke="#cc2a1e" strokeWidth={2.500} />{cursor}</>,
  <><path d="M5 0v10M0 5h10M3 2l2-2 2 2M3 8l2 2 2-2M2 3L0 5l2 2" strokeWidth={1.300} stroke="#333" />{cursor}</>,
  <circle cx="9" cy="8" r="5" strokeWidth={3} stroke="#aaa" strokeDasharray="3 1" />,
]

function StatusBar() {
  return (
    <footer className="flex h-[27px] shrink-0 items-center bg-[#cbcbcb] pt-px text-[12px] text-[#2b2b2b]">
      <p className="w-[530px] pl-px whitespace-nowrap">Click to select, TAB for alternates, CTRL adds, SHIFT unselects.</p>
      <Icon size={18} box={18}>
        <path d="M1 8l3-2h6v8l-2 3H1z" fill="#7cc4ee" stroke="#2a72b0" />
        <path d="M5 5l3-3h6l-1 5H8z" fill="#8fd08f" stroke="#3c8c3c" />
        <path d="M12 8v9M16 10v7M10 7h4M15 7v3h2V7" strokeWidth={1.600} />
      </Icon>
      <select aria-label="Active workset" className="ml-[7px] h-[19px] w-[211px] appearance-none bg-white" />
      <Icon size={16} box={16} className="ml-[9px]">
        <path d="M4 1h10v4H4zM9 5v3H6v3" stroke="#888" fill="#f4f4f4" />
        <path d="M1 16l2-5h6v5z" fill="#999" stroke="none" />
      </Icon>
      <span className="ml-[3px] w-[30px]">:0</span>
      <Icon size={17} box={17}>
        <path d="M1 1h15v15H1z" fill="#eee" strokeWidth={1.800} />
        <path d="M1 3h15M4 7h2M8 7h6M4 10h2M8 10h6M8 13h6" strokeWidth={1.800} />
      </Icon>
      <Icon size={16} box={16} className="ml-[8px]">
        <path d="M5 1h11v13H5z" fill="#909090" stroke="none" />
        <path d="M0 4h5M0 11h8M6 8l3 3-3 3" stroke="#777" />
      </Icon>
      <div className="relative ml-[7px]">
        <select aria-label="Design option" className="h-[19px] w-[212px] appearance-none bg-white pl-[2px] text-[#7d7d7d]">
          <option>Main Model</option>
        </select>
        <svg width="8" height="5" viewBox="0 0 8 5" className="pointer-events-none absolute top-[7px] right-[3px]" fill="none" stroke="#aaa" aria-hidden="true">
          <path d="M0 0l4 4 4-4" />
        </svg>
      </div>
      <div className="mr-[87px] ml-auto flex items-center gap-[8px]">
        {selectionIcons.map((glyph, i) => (
          <button key={i} aria-label={`Selection option ${i + 1}`}><Icon size={17} box={17}>{glyph}</Icon></button>
        ))}
        <button className="flex items-center text-[#555]">
          <Icon size={17} box={17}><path d="M1 1h15l-6 7v8l-3-2V8z" fill="#a9b4c4" /></Icon>
          :0
        </button>
      </div>
    </footer>
  )
}

// ─── Desktop ──────────────────────────────────────────────────────────────────

function WallpaperStrip() {
  return (
    <svg viewBox="0 0 1600 19" preserveAspectRatio="none" className="h-[19px] w-full shrink-0" aria-hidden="true">
      <defs>
        <linearGradient id="bloom" x1="0" x2="1">
          <stop offset="0" stopColor="#1c56dc" />
          <stop offset="0.200" stopColor="#0d49c0" />
          <stop offset="0.450" stopColor="#08249a" />
          <stop offset="0.600" stopColor="#1038b8" />
          <stop offset="0.850" stopColor="#0a2c90" />
          <stop offset="1" stopColor="#020a30" />
        </linearGradient>
        <linearGradient id="petal" x1="0" x2="1">
          <stop offset="0" stopColor="#1a6ce0" />
          <stop offset="1" stopColor="#0828a0" />
        </linearGradient>
        <linearGradient id="dusk" x1="0" x2="1">
          <stop offset="0" stopColor="#01020c" />
          <stop offset="0.400" stopColor="#061e70" />
          <stop offset="0.800" stopColor="#0a2f9c" />
          <stop offset="1" stopColor="#02081c" />
        </linearGradient>
      </defs>
      <path d="M0 0h1600v19H0z" fill="#020c1c" />
      <path d="M268 0h690l0 19H288z" fill="url(#bloom)" />
      <path d="M296 0h120l20 19H326z" fill="url(#petal)" />
      <path d="M483 0h36l-4 19h-24z" fill="#2456e8" />
      <path d="M536 0h106l26 19H536z" fill="#010150" />
      <path d="M642 0h44l36 19h-54z" fill="#1a48d8" />
      <path d="M985 0L890 19h250l34-19z" fill="url(#dusk)" />
      <path d="M1196 0h40l-14 19h-46z" fill="#10288c" />
    </svg>
  )
}

function Taskbar() {
  return (
    <div className="flex h-[50px] shrink-0 items-center border-t border-[#3a3f50] bg-linear-to-r from-[#1a1f2a] via-[#131c58] to-[#191e28] text-[#e6e8ee]">
      <button className="flex w-[579px] items-center gap-[5px] pl-[20px] text-left">
        <svg width="30" height="30" viewBox="0 0 30 30" aria-hidden="true">
          <path d="M12 6L1 26c0 2 1 3 2 3h21c2 0 2-1 2-3L15 6c-1-2-2-2-3 0z" fill="#f3c62e" />
          <path d="M8 19c0-5 10-6 11 0zM8 21h11M9 24h9" fill="#3a3216" stroke="#3a3216" strokeWidth="1.500" />
          <circle cx="21" cy="8" r="8" fill="#f08a96" />
          <text x="21" y="12" fontSize="11" textAnchor="middle" fill="#3a1a20">1</text>
        </svg>
        <span dir="rtl" className="text-right text-[12px] leading-[16px]">
          <span className="block">ضباب تحذير</span>
          <span className="block text-[#b0b4be]">قيد الحدوث</span>
        </span>
      </button>
      <button aria-label="Start">
        <svg width="24" height="25" viewBox="0 0 24 25" aria-hidden="true">
          <path d="M0 0h11.500v12H0z" fill="#7cd0f6" />
          <path d="M12.500 0H24v12H12.500z" fill="#5cc0f4" />
          <path d="M0 13h11.500v12H0z" fill="#4ab4f2" />
          <path d="M12.500 13H24v12H12.500z" fill="#2aa0ee" />
        </svg>
      </button>
      <label className="ml-[14px] flex h-[34px] w-[229px] items-center rounded-full border border-[#303a6c] bg-[#28325f] pl-[12px]">
        <svg width="16" height="16" viewBox="0 0 16 16" fill="none" stroke="#dfe3ee" strokeWidth="1.800" className="shrink-0" aria-hidden="true">
          <circle cx="6.500" cy="6.500" r="5.500" /><path d="M10.500 10.500L15 15" />
        </svg>
        <input placeholder="Search" aria-label="Search" className="ml-[9px] w-[135px] bg-transparent text-[14px] placeholder:text-[#d2d5e2]" />
        <svg width="48" height="28" viewBox="0 0 48 28" className="shrink-0" aria-hidden="true">
          <ellipse cx="24" cy="20" rx="23" ry="6" fill="#3a9cc0" />
          <path d="M5 19C3 10 11 7 15 9 16 3 25 1 28 6c6-3 10 1 10 5 5 1 6 5 5 9z" fill="#a9c4f0" />
          <path d="M28 8c6-3 10 0 10 4 4 1 5 4 4 7H30z" fill="#f0a890" />
          <path d="M22 4h4v14l4 4H18l4-4z" fill="#e8f4fc" />
          <ellipse cx="24" cy="21" rx="14" ry="3" fill="none" stroke="#8fe0ea" />
        </svg>
      </label>
      <button aria-label="Task view" className="ml-[13px]">
        <svg width="25" height="24" viewBox="0 0 25 24" aria-hidden="true">
          <path d="M6 1h19v17H6z" fill="#e6e8ea" /><path d="M0 6h18v18H0z" fill="#8a8c90" opacity=".85" />
        </svg>
      </button>
      <button aria-label="Edge" className="relative ml-[21px]">
        <svg width="25" height="25" viewBox="0 0 25 25" aria-hidden="true">
          <circle cx="12.500" cy="12.500" r="12.500" fill="#1b7fd0" />
          <path d="M1 9C4-2 24-3 25 11c0 6-8 7-10 4 2-2 1-7-4-7C6 7 2 9 0 13z" fill="#3fd08a" />
          <path d="M1 9C3 2 10 0 14 0 8 2 6 6 0 13z" fill="#2ab0d8" />
          <path d="M8 12c-2 7 5 12 13 10-6 5-18 3-19-6 1-4 4-5 6-4z" fill="#0c4f9c" />
        </svg>
        <span className="absolute -bottom-[8px] left-[9px] h-[3px] w-[7px] rounded bg-[#9a9eae]" />
      </button>
      <button aria-label="File Explorer" className="relative ml-[20px]">
        <svg width="26" height="24" viewBox="0 0 26 24" aria-hidden="true">
          <path d="M0 3c0-1 1-2 2-2h8l3 3h11c1 0 2 1 2 2v17H0z" fill="#e0a020" />
          <path d="M0 7h26v16H0z" fill="#fbcf4a" />
          <path d="M5 24v-5c0-1 1-2 2-2h12c1 0 2 1 2 2v5z" fill="#1c7ac0" />
        </svg>
        <span className="absolute -bottom-[8px] left-[10px] h-[3px] w-[7px] rounded bg-[#9a9eae]" />
      </button>
      <button aria-label="Revit" className="relative ml-[12px] flex h-[42px] w-[42px] items-center justify-center rounded border border-[#2b3460] bg-[#212a54]">
        <svg width="22" height="25" viewBox="0 0 22 25" aria-hidden="true">
          <path d="M0 1h4v24l-4-8z" fill="#5a9cf4" />
          <path d="M2 0h20v17H2z" fill="#1c62e0" />
          <path d="M2 17h20v8H2z" fill="#0c3c96" />
          <text x="13" y="14" fontSize="14" fontWeight="700" textAnchor="middle" fill="#fff">R</text>
          <text x="13" y="23" fontSize="5" fontWeight="700" textAnchor="middle" fill="#fff">RVT</text>
        </svg>
        <span className="absolute bottom-px left-[12px] h-[3px] w-[17px] rounded bg-[#5cb8f0]" />
      </button>
      <div className="ml-auto flex items-center pr-[22px]">
        <svg width="12" height="8" viewBox="0 0 12 8" fill="none" stroke="#e6e8ee" strokeWidth="1.800" aria-hidden="true"><path d="M1 7l5-5 5 5" /></svg>
        <svg width="18" height="14" viewBox="0 0 18 14" className="ml-[19px]" aria-hidden="true">
          <path d="M4 12c-5 0-5-6 0-6 1-5 8-5 9 0 5 0 5 6 0 6z" fill="#8b8f9a" /><path d="M2 0l14 14" stroke="#e6e8ee" strokeWidth="1.500" />
        </svg>
        <span className="ml-[28px] text-[14px]">ع</span>
        <svg width="17" height="13" viewBox="0 0 17 13" fill="none" stroke="#fff" strokeWidth="1.400" className="ml-[28px]" aria-hidden="true">
          <path d="M1 5c4-5 11-5 15 0M3.500 7.500c3-3.500 7-3.500 10 0M6 10c1.500-2 3.500-2 5 0" /><circle cx="8.500" cy="11.500" r="1" fill="#fff" />
        </svg>
        <svg width="16" height="13" viewBox="0 0 16 13" fill="none" stroke="#fff" strokeWidth="1.300" className="ml-[8px]" aria-hidden="true">
          <path d="M1 4h3l4-3v11L4 9H1zM10 4c1 1 1 4 0 5" /><path d="M12 2c2 2 2 7 0 9M14 0c3 3 3 10 0 13" stroke="#666c7a" />
        </svg>
        <svg width="17" height="12" viewBox="0 0 17 12" fill="none" stroke="#fff" strokeWidth="1.400" className="ml-[9px]" aria-hidden="true">
          <rect x="1" y="1" width="13" height="10" rx="2" /><path d="M3 3h5v6H3z" fill="#fff" stroke="none" /><path d="M16 4v4" />
        </svg>
        <div className="ml-[17px] text-right text-[12px] leading-[17px]">
          <div>15:55:54</div>
          <div>24/01/2025</div>
        </div>
        <svg width="15" height="17" viewBox="0 0 15 17" className="ml-[9px]" aria-hidden="true">
          <path d="M0 13l2-3V6c0-6 10-6 10 0v4l2 3zM5 14h4c0 3-4 3-4 0z" fill="#e6e8ee" />
          <path d="M5 6h4l-4 4h4" stroke="#222" fill="none" /><path d="M11 1h3l-3 3h3" stroke="#e6e8ee" fill="none" />
        </svg>
      </div>
    </div>
  )
}

function Watermark() {
  return (
    <div className="pointer-events-none absolute bottom-[20px] left-1/2 flex w-[200px] -translate-x-1/2 flex-col items-center text-[#b4b4bc]/40">
      <span dir="rtl" className="h-[60px] font-[DejaVu_Sans,sans-serif] text-[56px] leading-[60px] font-bold">مستقل</span>
      <span className="text-[32px] leading-[32px] font-semibold">mostaql.com</span>
    </div>
  )
}

export default function App() {
  return (
    <div className="relative flex h-screen flex-col overflow-hidden bg-[#020814] font-['Noto_Sans','Open_Sans',sans-serif]">
      <div className="mr-[17px] flex min-h-0 flex-1 flex-col overflow-hidden rounded-[8px] border-t border-b border-l-[3px] border-t-[#f2f4f2] border-b-[#8a8c90] border-l-[#4a4d54] bg-[#eeeeee]">
        <TitleBar />
        <RibbonTabs />
        <Ribbon />
        <div className="h-[27px] shrink-0 bg-[#eeeeee]" />
        <div className="flex min-h-0 flex-1 border-t-2 border-[#cbcbcb]">
          <PropertiesPalette />
          <ViewArea />
          <ProjectBrowser />
        </div>
        <StatusBar />
      </div>
      <WallpaperStrip />
      <Taskbar />
      <Watermark />
    </div>
  )
}
